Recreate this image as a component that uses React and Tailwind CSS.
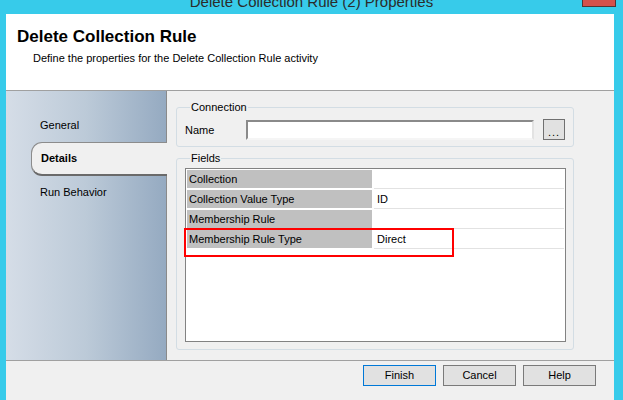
import React from 'react'

const rows = [
  { label: 'Collection', value: '' },
  { label: 'Collection Value Type', value: 'ID' },
  { label: 'Membership Rule', value: '' },
  { label: 'Membership Rule Type', value: 'Direct' },
]

const navItems = ['General', 'Details', 'Run Behavior']

const App = () => {
  return (
    <div
      className="w-[623px] h-[400px] bg-[#37cbea] flex flex-col overflow-hidden text-[11px] text-black"
      style={{ fontFamily: '"Liberation Sans", Arial, sans-serif' }}
    >
      {/* title bar */}
      <div className="relative h-[14px] shrink-0 overflow-hidden">
        <div className="text-center text-[15px] leading-[15px] text-[#2b2b2b] -mt-[6px]">
          Delete Collection Rule (2) Properties
        </div>
        <div className="absolute left-[582px] top-[-1px] w-[34px] h-[8px] bg-[#d5504b] border border-[#553333]"></div>
      </div>

      <div className="flex-1 ml-[6px] mr-[9px] flex flex-col bg-[#f0f0f0]">
        {/* header */}
        <div className="h-[77px] shrink-0 bg-white border-b border-[#a0a0a0] pl-[11px] pt-[13px]">
          <div className="text-[17px] leading-[20px] font-bold">Delete Collection Rule</div>
          <div className="ml-[16px] mt-[5px] leading-[13px]">
            Define the properties for the Delete Collection Rule activity
          </div>
        </div>

        {/* body */}
        <div className="h-[270px] shrink-0 flex border-b border-[#a0a0a0]">
          {/* nav */}
          <div className="w-[161px] shrink-0 border-r border-[#8a8a8a] bg-gradient-to-r from-[#d5dde7] via-[#bccad8] to-[#95aac1] pt-[18px] flex flex-col">
            {navItems.map((item) =>
              item === 'Details' ? (
                <div
                  key={item}
                  className="relative z-10 ml-[25px] -mr-[1px] h-[34px] flex items-center pl-[9px] bg-[#f0f0f0] border border-r-0 border-[#8c8c8c] border-b-2 border-b-[#6a6a6a] rounded-l-[11px] font-bold"
                >
                  {item}
                </div>
              ) : (
                <div key={item} className="h-[33px] flex items-center pl-[34px]">
                  {item}
                </div>
              )
            )}
          </div>

          {/* main */}
          <div className="flex-1 pl-[9px] pr-[40px] pt-[10px]">
            <fieldset className="border border-[#d3dde4] rounded-[3px] pl-[8px] pr-[7px] pt-[4px] pb-[6px]">
              <legend className="ml-[5px] px-[1px] leading-[13px]">Connection</legend>
              <div className="flex items-center">
                <div className="w-[61px] pt-[2px]">Name</div>
                <div className="w-[288px] h-[20px] mt-[2px] bg-white border-2 border-t-[#8a8a8a] border-l-[#8a8a8a] border-b-[#f5f5f5] border-r-[#e3e3e3]"></div>
                <div className="ml-[9px] w-[22px] h-[21px] bg-[#e1e1e1] border border-[#707070] flex items-end justify-center pb-[3px] leading-[8px] tracking-[1px]">
                  ...
                </div>
              </div>
            </fieldset>

            <fieldset className="mt-[5px] border border-[#d3dde4] rounded-[3px] pl-[8px] pr-[7px] pt-[3px] pb-[7px]">
              <legend className="ml-[5px] px-[1px] leading-[13px]">Fields</legend>
              <div className="relative h-[174px] bg-white border border-[#828282] pt-[1px] px-[1px]">
                {rows.map((row) => (
                  <div key={row.label} className="flex h-[20px]">
                    <div className="w-[185px] h-[18px] bg-[#c0c0c0] pl-[2px] leading-[18px]">{row.label}</div>
                    <div className="flex-1 ml-[2px] h-[19px] border-b border-[#e2e2e2] pl-[3px] leading-[18px]">
                      {row.value}
                    </div>
                  </div>
                ))}
                <div className="absolute left-[-2px] top-[59px] w-[270px] h-[29px] border-2 border-[#ff0000]"></div>
              </div>
            </fieldset>
          </div>
        </div>

        {/* footer */}
        <div className="flex-1 flex justify-end items-start gap-[7px] pt-[4px] pr-[18px]">
          <button className="w-[73px] h-[21px] bg-[#e1e1e1] border border-[#0078d7] text-[11px]">Finish</button>
          <button className="w-[73px] h-[21px] bg-[#e1e1e1] border border-[#7a7a7a] text-[11px]">Cancel</button>
          <button className="w-[73px] h-[21px] bg-[#e1e1e1] border border-[#7a7a7a] text-[11px]">Help</button>
        </div>
      </div>
    </div>
  )
}

export default App
